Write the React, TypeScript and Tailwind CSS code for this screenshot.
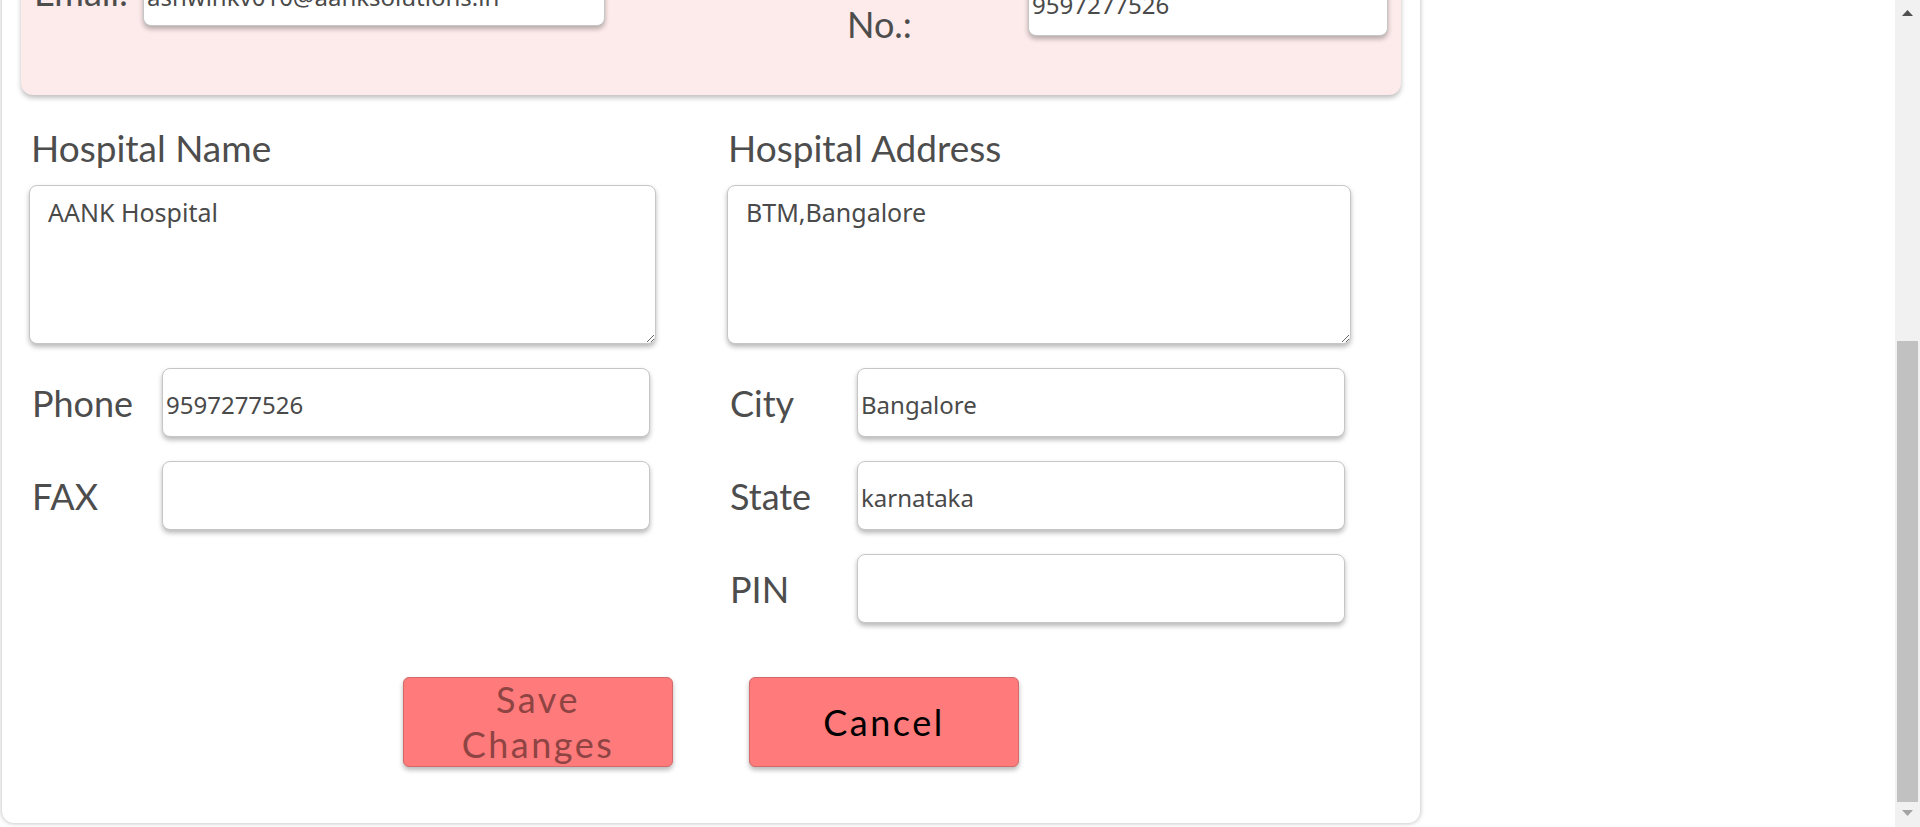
import React from "react";

const FONT = "font-['Noto_Sans','Open_Sans',sans-serif]";
const LATO = "font-['Lato','Noto_Sans',sans-serif]";
const LABEL = `${LATO} text-[36px] leading-[44px] text-[#4d4d4d]`;
const HEAD = `${LATO} text-[37px] leading-[46px] text-[#4d4d4d]`;
const INPUT = `${FONT} h-[69px] rounded-[8px] border border-[#c6c6c6] bg-white pl-[3px] text-[24px] text-[#4a4a4a] shadow-[0_3px_5px_rgba(0,0,0,0.28)] outline-none`;
const AREA = `${FONT} h-[159px] rounded-[8px] border border-[#c6c6c6] bg-white px-[18px] pt-[8px] text-[25px] leading-normal text-[#4a4a4a] shadow-[0_3px_5px_rgba(0,0,0,0.28)] outline-none`;
const BTN = `${LATO} flex h-[90px] w-[270px] items-center justify-center rounded-[6px] border border-[#d26a6a] bg-[#ff7a7a] text-center text-[36px] leading-[45px] tracking-[2.5px] shadow-[0_3px_5px_rgba(0,0,0,0.28)]`;

function Row({ label, value, labelW }: { label: string; value: string; labelW: string }) {
  return (
    <div className="flex h-[69px] items-center">
      <div className={`${LABEL} ${labelW} pl-[3px]`}>{label}</div>
      <input readOnly value={value} className={`${INPUT} w-[488px] pt-[4px]`} />
    </div>
  );
}

export default function App() {
  return (
    <div className="flex h-[827px] w-[1920px] overflow-hidden bg-white">
      <div className="flex-1 overflow-hidden">
        <div className="ml-[2px] -mt-[60px] w-[1418px] rounded-b-[12px] bg-white pb-[56px] shadow-[0_0_5px_rgba(0,0,0,0.3)]">
          {/* pink contact section */}
          <div className="ml-[19px] flex h-[155px] w-[1380px] items-start rounded-b-[12px] bg-[#fdeaea] shadow-[0_3px_5px_rgba(0,0,0,0.25)]">
            <div className="ml-[11px] mt-[17px] flex w-[815px] items-center">
              <div className={`${LABEL} w-[111px] pl-[2px]`}>Email:</div>
              <input readOnly value="ashwinkv010@aanksolutions.in" className={`${INPUT} w-[462px] pt-[9px]`} />
            </div>
            <div className="flex items-start">
              <div className={`${LABEL} mt-[18px] w-[181px]`}>
                Contact
                <br />
                No.:
              </div>
              <input readOnly value="9597277526" className={`${INPUT} mt-[27px] w-[360px] pt-[6px]`} />
            </div>
          </div>

          {/* hospital details */}
          <div className="mt-[30px] flex pl-[27px]">
            <div className="flex w-[698px] flex-col">
              <div className={`${HEAD} pl-[2px]`}>Hospital Name</div>
              <textarea readOnly value="AANK Hospital" className={`${AREA} mt-[14px] w-[627px]`} />
              <div className="mt-[24px] flex flex-col gap-[24px]">
                <Row label="Phone" value="9597277526" labelW="w-[133px]" />
                <Row label="FAX" value="" labelW="w-[133px]" />
              </div>
            </div>
            <div className="flex w-[640px] flex-col">
              <div className={`${HEAD} pl-[1px]`}>Hospital Address</div>
              <textarea readOnly value="BTM,Bangalore" className={`${AREA} mt-[14px] w-[624px]`} />
              <div className="mt-[24px] flex flex-col gap-[24px]">
                <Row label="City" value="Bangalore" labelW="w-[130px]" />
                <Row label="State" value="karnataka" labelW="w-[130px]" />
                <Row label="PIN" value="" labelW="w-[130px]" />
              </div>
            </div>
          </div>

          {/* buttons */}
          <div className="mt-[54px] flex justify-center gap-[76px]">
            <button className={`${BTN} text-[#8f4444]`}>
              Save
              <br />
              Changes
            </button>
            <button className={`${BTN} text-black`}>Cancel</button>
          </div>
        </div>
      </div>

      {/* scrollbar */}
      <div className="flex w-[25px] flex-col items-center bg-[#f1f1f1]">
        <svg width="11" height="6" viewBox="0 0 11 6" className="mt-[10px]">
          <polygon points="5.5,0 11,6 0,6" fill="#505050" />
        </svg>
        <div className="mt-[325px] h-[461px] w-[21px] bg-[#c1c1c1]" />
        <svg width="11" height="6" viewBox="0 0 11 6" className="mt-[8px]">
          <polygon points="0,0 11,0 5.5,6" fill="#a3a3a3" />
        </svg>
      </div>
    </div>
  );
}
